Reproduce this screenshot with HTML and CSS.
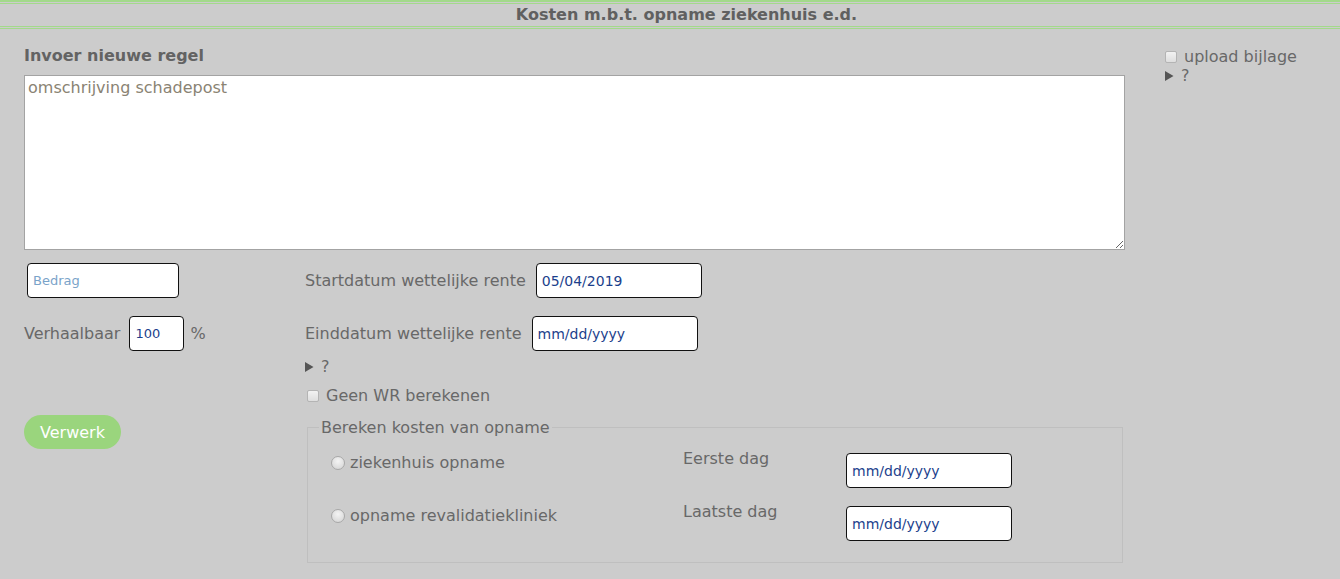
FILE: index.html
```html
<!DOCTYPE html>
<html lang="nl">
<head>
  <meta charset="UTF-8">
  <meta name="viewport" content="width=device-width, initial-scale=1.0">
  <title>Kosten m.b.t. opname ziekenhuis e.d.</title>
  <link rel="stylesheet" href="styles.css">
</head>
<body>
  <header class="topbar">
    <h1 class="title">Kosten m.b.t. opname ziekenhuis e.d.</h1>
  </header>

  <div class="page">
    <div class="entry">
      <h2>Invoer nieuwe regel</h2>
      <textarea class="description" placeholder="omschrijving schadepost"></textarea>

      <div class="form-grid">
        <div class="col-left">
          <div class="field-row">
            <input type="text" class="amount" placeholder="Bedrag">
          </div>
          <div class="field-row">
            <label for="recoverable">Verhaalbaar</label>
            <input type="text" id="recoverable" class="percent" value="100">
            <span class="unit">%</span>
          </div>
          <button class="btn">Verwerk</button>
        </div>

        <div class="col-right">
          <div class="field-row">
            <label for="start-date">Startdatum wettelijke rente</label>
            <input type="text" id="start-date" class="date" value="05/04/2019">
          </div>
          <div class="field-row last">
            <label for="end-date">Einddatum wettelijke rente</label>
            <input type="text" id="end-date" class="date" placeholder="mm/dd/yyyy">
          </div>
          <details class="help">
            <summary>?</summary>
          </details>
          <label class="check">
            <input type="checkbox"> Geen WR berekenen
          </label>

          <fieldset class="stay">
            <legend>Bereken kosten van opname</legend>
            <div class="stay-grid">
              <label class="radio"><input type="radio" name="stay-type"> ziekenhuis opname</label>
              <label class="day-label" for="first-day">Eerste dag</label>
              <input type="text" id="first-day" class="date" placeholder="mm/dd/yyyy">

              <label class="radio"><input type="radio" name="stay-type"> opname revalidatiekliniek</label>
              <label class="day-label" for="last-day">Laatste dag</label>
              <input type="text" id="last-day" class="date" placeholder="mm/dd/yyyy">
            </div>
          </fieldset>
        </div>
      </div>
    </div>

    <aside class="side">
      <label class="check">
        <input type="checkbox"> upload bijlage
      </label>
      <details class="help">
        <summary>?</summary>
      </details>
    </aside>
  </div>
</body>
</html>
```

FILE: styles.css
```css
:root {
  --bg: #cccccc;
  --text: #686868;
  --green: #a3d98b;
  --button: #9ad57d;
  --value: #1c3f8c;
}

body {
  margin: 0;
  background-color: var(--bg);
  color: var(--text);
  font-family: "DejaVu Sans", Verdana, sans-serif;
  font-size: 16px;
}

.topbar {
  border-top: 2px solid var(--green);
  border-bottom: 1px solid var(--green);
  padding: 1px 0;
}

.title {
  margin: 0;
  border-top: 1px solid var(--green);
  border-bottom: 1px solid var(--green);
  padding-left: 33px;
  text-align: center;
  font-size: 16px;
  line-height: 22px;
  color: #606060;
}

.page {
  display: flex;
}

.entry {
  width: 1101px;
  margin-left: 24px;
}

h2 {
  margin: 17px 0 9px;
  font-size: 16px;
  line-height: 20px;
  color: #636363;
}

.description {
  display: block;
  box-sizing: border-box;
  width: 100%;
  height: 175px;
  margin: 0;
  padding: 2px 3px;
  border: 1px solid #a3a3a3;
  background-color: #ffffff;
  font-family: inherit;
  font-size: 16px;
  color: var(--text);
  resize: vertical;
}

.description::placeholder {
  color: #8a8373;
}

.form-grid {
  display: flex;
  margin-top: 13px;
}

.col-left {
  width: 281px;
}

.col-right {
  flex: 1;
}

.field-row {
  display: flex;
  align-items: center;
  height: 35px;
  margin-bottom: 18px;
}

.field-row.last {
  margin-bottom: 0;
}

.field-row label {
  margin-right: 10px;
}

input[type="text"] {
  box-sizing: border-box;
  height: 35px;
  padding: 0 5px;
  border: 1px solid #111111;
  border-radius: 4px;
  background-color: #ffffff;
  font-family: inherit;
  font-size: 13px;
  color: var(--value);
}

input[type="text"]::placeholder {
  color: var(--value);
  opacity: 1;
}

.amount {
  width: 152px;
  margin-left: 3px;
}

.amount::placeholder {
  color: #7aa3c9 !important;
}

.col-left .field-row label {
  margin-right: 9px;
}

.percent {
  width: 55px;
}

.unit {
  margin-left: 6px;
}

.date {
  width: 166px;
  font-size: 14px !important;
}

.btn {
  display: block;
  width: 97px;
  height: 34px;
  margin-top: 64px;
  padding: 0;
  border: none;
  border-radius: 17px;
  background-color: var(--button);
  color: #ffffff;
  font-family: inherit;
  font-size: 16px;
  cursor: pointer;
}

.help {
  line-height: 19px;
}

.help summary {
  cursor: pointer;
}

.help summary::marker {
  color: #555555;
  font-size: 15px;
}

.col-right .help {
  margin-top: 6px;
}

.check {
  display: flex;
  align-items: center;
  line-height: 20px;
}

.col-right .check {
  margin-top: 9px;
  margin-left: 2px;
}

.check input {
  appearance: none;
  width: 12px;
  height: 12px;
  margin: 0 7px 0 0;
  border: 1px solid #b4b4b4;
  border-radius: 2px;
  background: linear-gradient(#f2f2f2, #dedede);
}

.stay {
  width: 816px;
  box-sizing: border-box;
  margin: 12px 0 0 2px;
  padding: 0 11px 21px;
  border: 1px solid #bfbfbf;
}

.stay legend {
  padding: 0 2px;
  line-height: 19px;
}

.stay-grid {
  display: grid;
  grid-template-columns: 352px 163px 166px;
  align-items: start;
  row-gap: 14px;
  margin: 12px 0 0 12px;
}

.radio {
  display: flex;
  align-items: center;
  margin-top: 4px;
  line-height: 20px;
}

.radio input {
  appearance: none;
  width: 14px;
  height: 14px;
  margin: 0 5px 0 0;
  border: 1px solid #a8a8a8;
  border-radius: 50%;
  background: radial-gradient(circle at 50% 35%, #f4f4f4, #d2d2d2);
}

.day-label {
  line-height: 20px;
}

.stay-grid .date {
  margin-top: 4px;
}

.side {
  margin: 18px 0 0 40px;
}

.side .check {
  line-height: 19px;
}
```
